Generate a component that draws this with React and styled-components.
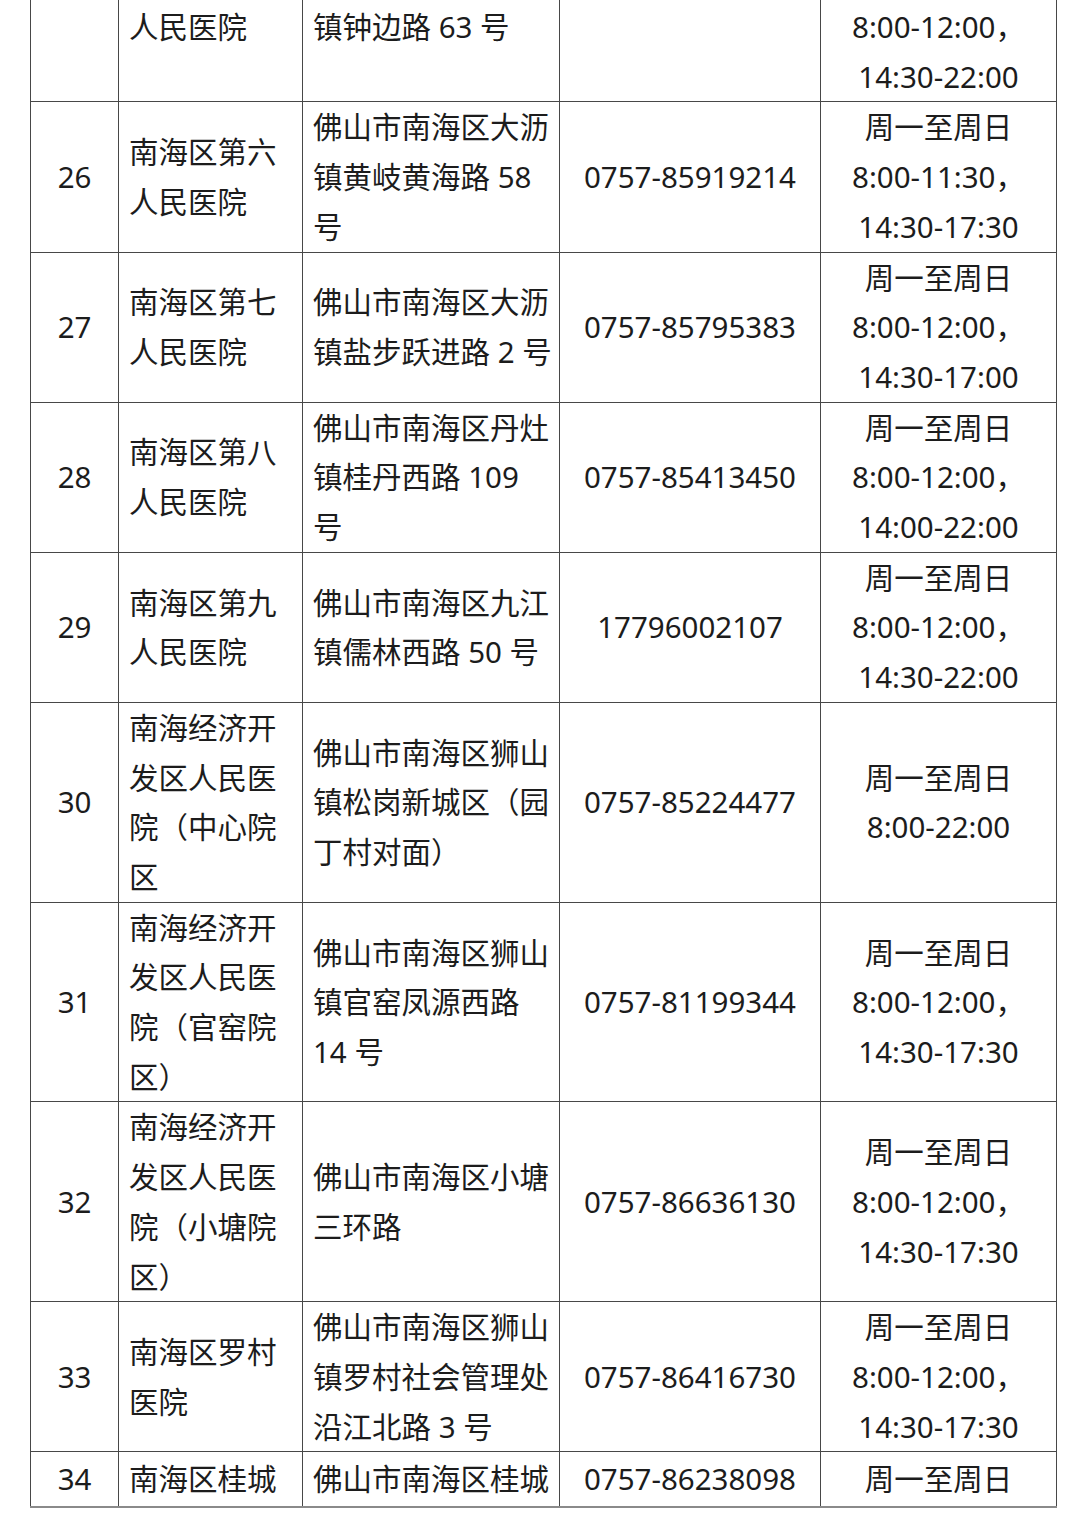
import React from 'react';
import styled, { createGlobalStyle } from 'styled-components';

const GlobalStyle = createGlobalStyle`
  html, body {
    margin: 0;
    padding: 0;
    background: #ffffff;
  }
  body {
    font-family: 'Noto Sans', 'Noto Sans CJK SC', sans-serif;
    color: #1c1c1c;
  }
`;

const columns = [88, 184, 257, 261, 236];

const rows = [
  {
    id: 'top',
    kind: 'cut-top',
    no: '',
    name: ['人民医院'],
    address: ['镇钟边路 63 号'],
    phone: '',
    hours: ['8:00-12:00，', '14:30-22:00'],
  },
  {
    id: '26',
    no: '26',
    name: ['南海区第六', '人民医院'],
    address: ['佛山市南海区大沥', '镇黄岐黄海路 58', '号'],
    phone: '0757-85919214',
    hours: ['周一至周日', '8:00-11:30，', '14:30-17:30'],
  },
  {
    id: '27',
    no: '27',
    name: ['南海区第七', '人民医院'],
    address: ['佛山市南海区大沥', '镇盐步跃进路 2 号'],
    phone: '0757-85795383',
    hours: ['周一至周日', '8:00-12:00，', '14:30-17:00'],
  },
  {
    id: '28',
    no: '28',
    name: ['南海区第八', '人民医院'],
    address: ['佛山市南海区丹灶', '镇桂丹西路 109', '号'],
    phone: '0757-85413450',
    hours: ['周一至周日', '8:00-12:00，', '14:00-22:00'],
  },
  {
    id: '29',
    no: '29',
    name: ['南海区第九', '人民医院'],
    address: ['佛山市南海区九江', '镇儒林西路 50 号'],
    phone: '17796002107',
    hours: ['周一至周日', '8:00-12:00，', '14:30-22:00'],
  },
  {
    id: '30',
    no: '30',
    name: ['南海经济开', '发区人民医', '院（中心院', '区'],
    address: ['佛山市南海区狮山', '镇松岗新城区（园', '丁村对面）'],
    phone: '0757-85224477',
    hours: ['周一至周日', '8:00-22:00'],
  },
  {
    id: '31',
    no: '31',
    name: ['南海经济开', '发区人民医', '院（官窑院', '区）'],
    address: ['佛山市南海区狮山', '镇官窑凤源西路', '14 号'],
    phone: '0757-81199344',
    hours: ['周一至周日', '8:00-12:00，', '14:30-17:30'],
  },
  {
    id: '32',
    no: '32',
    name: ['南海经济开', '发区人民医', '院（小塘院', '区）'],
    address: ['佛山市南海区小塘', '三环路'],
    phone: '0757-86636130',
    hours: ['周一至周日', '8:00-12:00，', '14:30-17:30'],
  },
  {
    id: '33',
    no: '33',
    name: ['南海区罗村', '医院'],
    address: ['佛山市南海区狮山', '镇罗村社会管理处', '沿江北路 3 号'],
    phone: '0757-86416730',
    hours: ['周一至周日', '8:00-12:00，', '14:30-17:30'],
  },
  {
    id: '34',
    kind: 'cut-bottom',
    no: '34',
    name: ['南海区桂城'],
    address: ['佛山市南海区桂城'],
    phone: '0757-86238098',
    hours: ['周一至周日'],
  },
];

const Lines = ({ items }) =>
  items.map((text, i) => <Line key={i}>{text}</Line>);

const App = () => {
  return (
    <>
      <GlobalStyle />
      <Page>
        <Table>
          <colgroup>
            {columns.map((w, i) => (
              <Col key={i} $width={w} />
            ))}
          </colgroup>
          <tbody>
            {rows.map(row => (
              <Row key={row.id} $kind={row.kind}>
                <Cell $align="center">{row.no}</Cell>
                <Cell $align="left">
                  <Lines items={row.name} />
                </Cell>
                <Cell $align="left">
                  <Lines items={row.address} />
                </Cell>
                <Cell $align="center">{row.phone}</Cell>
                <Cell $align="center">
                  <Lines items={row.hours} />
                </Cell>
              </Row>
            ))}
          </tbody>
        </Table>
      </Page>
    </>
  );
};

export default App;

const Page = styled.div`
  width: 1080px;
  height: 1528px;
  box-sizing: border-box;
  padding-left: 30px;
  background: #ffffff;
  overflow: hidden;
`;

const Table = styled.table`
  width: 1026px;
  table-layout: fixed;
  border-collapse: collapse;
  font-size: 29.5px;
  line-height: 49.7px;
`;

const Col = styled.col`
  width: ${props => props.$width}px;
`;

const Row = styled.tr`
  height: ${props =>
    props.$kind === 'cut-top' ? '100px' : props.$kind === 'cut-bottom' ? '55px' : 'auto'};

  & > td {
    border: 1px solid #474747;
    border-top-width: ${props => (props.$kind === 'cut-top' ? '0' : '1px')};
    vertical-align: ${props => (props.$kind === 'cut-top' ? 'top' : 'middle')};
    padding-top: ${props => (props.$kind === 'cut-top' ? '2px' : '0')};
  }
  ${props =>
    props.$kind === 'cut-bottom' &&
    `& > td { border-bottom: 2px solid #8a8a8a; }`}
`;

const Cell = styled.td`
  text-align: ${props => props.$align};
  padding: 0 0 0 ${props => (props.$align === 'left' ? '10px' : '0')};
  white-space: nowrap;
  overflow: hidden;
`;

const Line = styled.span`
  display: block;
  white-space: pre;
`;
